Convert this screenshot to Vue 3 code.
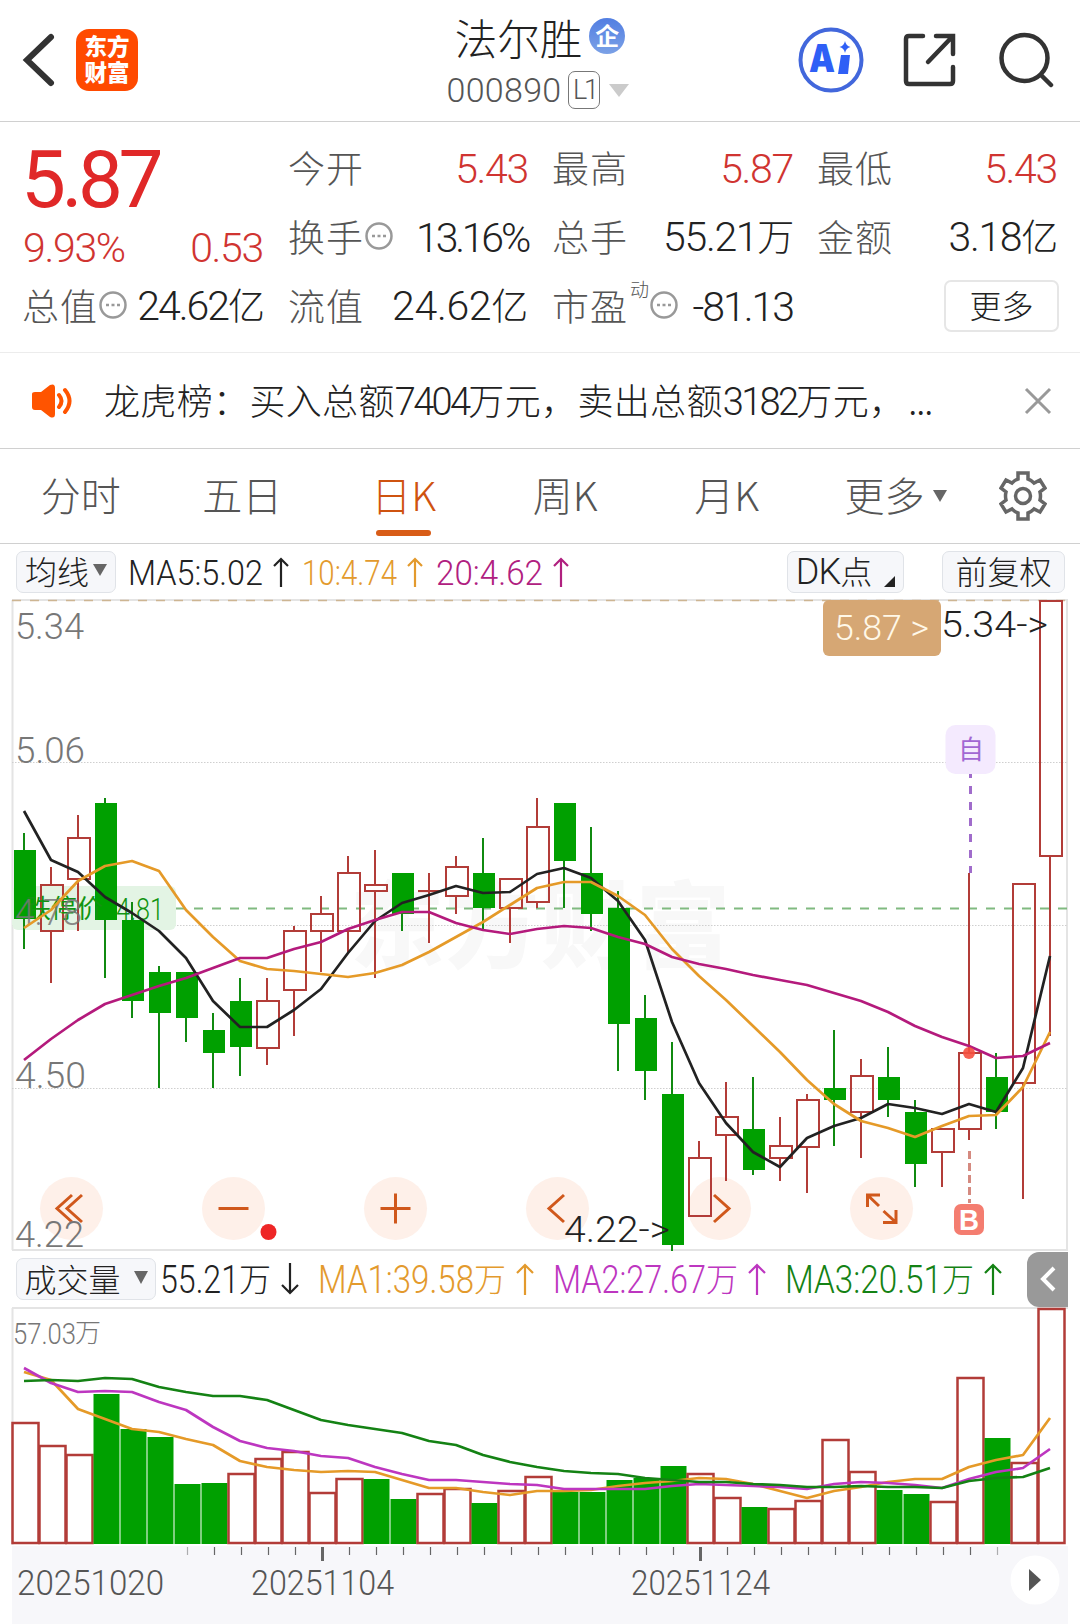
<script setup>
import { ref, computed } from 'vue';

const activeTab = ref(2);
const tabs = ['分时', '五日', '日K', '周K', '月K'];

const news = [
  { text: '龙虎榜：买入总额' },
  { text: '7404', num: true },
  { text: '万元，卖出总额' },
  { text: '3182', num: true },
  { text: '万元，' },
  { text: '...', dots: true },
];

const priceMas = [
  { label: 'MA5:5.02', cls: 'dark', width: 135 },
  { label: '10:4.74', cls: 'amber', width: 95 },
  { label: '20:4.62', cls: 'plum', width: 107 },
];

const volumeMas = [
  { label: '55.21', cls: 'dark', width: 111, down: true },
  { label: 'MA1:39.58', cls: 'amber', width: 188 },
  { label: 'MA2:27.67', cls: 'violet', width: 185 },
  { label: 'MA3:20.51', cls: 'green', width: 189 },
];

const step = 27;
const cx = (i) => 24 + i * step;

// [up, high, body top, body bottom, low]
const candles = [
  [0, 833, 850, 919, 949], [1, 867, 884, 932, 983], [1, 815, 837, 880, 931],
  [0, 798, 803, 920, 978], [0, 902, 920, 1001, 1018], [0, 966, 972, 1013, 1088],
  [0, 972, 972, 1018, 1042], [0, 1013, 1030, 1053, 1088], [0, 978, 1001, 1047, 1076],
  [1, 978, 1000, 1049, 1065], [1, 926, 930, 991, 1036], [1, 896, 913, 932, 972],
  [1, 856, 872, 932, 954], [1, 850, 884, 892, 978], [0, 873, 873, 914, 931],
  [1, 873, 890, 892, 943], [1, 856, 866, 897, 914], [0, 838, 873, 908, 931],
  [1, 878, 878, 909, 943], [1, 798, 826, 903, 908], [0, 803, 803, 861, 908],
  [0, 827, 873, 914, 931], [0, 891, 908, 1024, 1071], [0, 995, 1018, 1071, 1100],
  [0, 1042, 1094, 1245, 1251], [1, 1141, 1157, 1217, 1217], [1, 1082, 1116, 1136, 1181],
  [0, 1077, 1129, 1170, 1175], [1, 1117, 1145, 1159, 1181], [1, 1094, 1099, 1148, 1193],
  [0, 1030, 1088, 1100, 1146], [1, 1059, 1075, 1113, 1158], [0, 1047, 1077, 1100, 1117],
  [0, 1100, 1112, 1164, 1187], [1, 1128, 1128, 1153, 1187], [1, 873, 1052, 1130, 1140],
  [0, 1053, 1077, 1112, 1129], [1, 883, 883, 1084, 1199], [1, 600, 600, 857, 1036],
].map(([up, high, top, bottom, low], i) => ({ up, high, top, bottom, low, x: cx(i) }));

const ma5 = [811, 860, 872, 897, 913, 931, 958, 1001, 1027, 1027, 1010, 989, 953, 921, 903, 895, 886, 893, 892, 874, 868, 878, 901, 940, 1022, 1083, 1123, 1152, 1167, 1138, 1126, 1118, 1104, 1108, 1114, 1104, 1112, 1068, 956];
const ma10 = [928, 910, 881, 866, 861, 871, 910, 937, 961, 969, 971, 974, 977, 973, 965, 952, 937, 922, 905, 888, 882, 882, 896, 915, 949, 976, 1000, 1026, 1052, 1080, 1104, 1121, 1128, 1137, 1126, 1116, 1115, 1087, 1032];
const ma20 = [1060, 1039, 1020, 1004, 995, 986, 978, 968, 958, 958, 949, 942, 929, 920, 912, 912, 923, 930, 934, 929, 926, 928, 937, 944, 957, 964, 969, 975, 980, 985, 993, 1001, 1012, 1026, 1037, 1046, 1058, 1056, 1043];

const volumeTops = [1422, 1445, 1454, 1394, 1429, 1437, 1484, 1483, 1473, 1458, 1451, 1492, 1478, 1479, 1499, 1493, 1488, 1503, 1490, 1476, 1492, 1492, 1480, 1478, 1466, 1473, 1497, 1507, 1508, 1500, 1439, 1471, 1490, 1494, 1501, 1377, 1438, 1462, 1308];
// volume bars are coloured against the previous close, so these days differ from the candle
const volumeFlips = [0, 8, 13, 30];
const vma1 = [1372, 1380, 1409, 1419, 1429, 1432, 1439, 1445, 1461, 1467, 1470, 1472, 1471, 1472, 1480, 1488, 1488, 1492, 1495, 1491, 1491, 1490, 1486, 1483, 1481, 1478, 1479, 1484, 1491, 1498, 1491, 1487, 1482, 1479, 1479, 1467, 1460, 1455, 1418];
const vma2 = [1368, 1383, 1392, 1391, 1392, 1402, 1410, 1427, 1441, 1448, 1451, 1456, 1458, 1467, 1474, 1480, 1480, 1482, 1484, 1485, 1489, 1489, 1489, 1489, 1486, 1484, 1485, 1486, 1487, 1489, 1484, 1482, 1483, 1485, 1488, 1479, 1472, 1468, 1449];
const vma3 = [1381, 1380, 1381, 1378, 1379, 1387, 1392, 1396, 1396, 1400, 1410, 1420, 1425, 1429, 1433, 1441, 1445, 1455, 1462, 1467, 1471, 1473, 1474, 1478, 1480, 1482, 1482, 1484, 1485, 1487, 1487, 1486, 1487, 1487, 1488, 1481, 1478, 1477, 1468];

const line = (values) => values.map((y, i) => `${cx(i)},${y}`).join(' ');
const bars = computed(() => volumeTops.map((top, i) => ({
  top,
  x: 12 + i * step,
  up: volumeFlips.includes(i) ? !candles[i].up : candles[i].up,
})));

const ticks = Array.from({ length: 31 }, (_, k) => ({
  x: 187.5 + k * step,
  major: k === 5 || k === 19,
  faint: k === 0 || k === 30,
}));

const scale = [
  { v: '5.34', x: 15, y: 639, w: 69 },
  { v: '5.06', x: 15, y: 763, w: 70 },
  { v: '4.50', x: 15, y: 1088, w: 71 },
  { v: '4.22', x: 15, y: 1247, w: 69 },
];

const dates = [
  { v: '20251020', x: 17, w: 147 },
  { v: '20251104', x: 251, w: 143 },
  { v: '20251124', x: 631, w: 139 },
];
</script>

<template>
  <div class="page">
    <header class="topbar">
      <div class="side">
        <svg class="back" width="34" height="56" viewBox="0 0 34 56">
          <path d="M29 5 L5 28 L29 51" />
        </svg>
        <div class="logo"><span>东方</span><span>财富</span></div>
      </div>
      <div class="title">
        <div class="name">法尔胜<span class="corp">企</span></div>
        <div class="code num">
          <span class="digits">000890</span><span class="level">L1</span>
          <svg width="20" height="13" viewBox="0 0 20 13"><path d="M0 0 H20 L10 13 Z" fill="#cbcbcb" /></svg>
        </div>
      </div>
      <div class="side actions">
        <svg width="66" height="66" viewBox="0 0 66 66">
          <circle cx="33" cy="33" r="30.5" fill="none" stroke="#4267dc" stroke-width="4" />
          <text class="ai" x="11" y="45" textLength="26" lengthAdjust="spacingAndGlyphs">A</text>
          <path d="M43 28 H52 L50 47 H40 Z" fill="#2f5ff6" />
          <path d="M47 14 Q48 19 52.500 20 Q48 21 47 26 Q46 21 41.500 20 Q46 19 47 14 Z" fill="#2f5ff6" />
        </svg>
        <svg class="stroke" width="54" height="54" viewBox="0 0 54 54">
          <path d="M20 3 H6 Q3 3 3 6 V48 Q3 51 6 51 H47 Q50 51 50 48 V34" />
          <path d="M33 3 H50 V21 M49 4 L25 29" />
        </svg>
        <svg class="stroke" width="56" height="56" viewBox="0 0 56 56">
          <circle cx="26.500" cy="26" r="23" />
          <path d="M43 43 L53 53" />
        </svg>
      </div>
    </header>

    <section class="quote">
      <div class="main">
        <div class="last num">5.87</div>
        <div class="change num"><span>9.93%</span><span>0.53</span></div>
        <div class="cell">
          <span class="label">总值<svg class="info" viewBox="0 0 28 28"><circle cx="14" cy="14" r="12.500" /><path d="M7 14h3M12.500 14h3M18 14h3" /></svg></span>
          <span class="value tight num">24.62<i>亿</i></span>
        </div>
      </div>
      <div class="grid">
        <div class="cell"><span class="label">今开</span><span class="value num red">5.43</span></div>
        <div class="cell"><span class="label">最高</span><span class="value num red">5.87</span></div>
        <div class="cell"><span class="label">最低</span><span class="value num red">5.43</span></div>
        <div class="cell">
          <span class="label">换手<svg class="info" viewBox="0 0 28 28"><circle cx="14" cy="14" r="12.500" /><path d="M7 14h3M12.500 14h3M18 14h3" /></svg></span>
          <span class="value narrow num">13.16%</span>
        </div>
        <div class="cell"><span class="label">总手</span><span class="value num">55.21<i>万</i></span></div>
        <div class="cell"><span class="label">金额</span><span class="value num">3.18<i>亿</i></span></div>
        <div class="cell"><span class="label">流值</span><span class="value wide num">24.62<i>亿</i></span></div>
        <div class="cell">
          <span class="label">市盈<sup>动</sup><svg class="info" viewBox="0 0 28 28"><circle cx="14" cy="14" r="12.500" /><path d="M7 14h3M12.500 14h3M18 14h3" /></svg></span>
          <span class="value tight num">-81.13</span>
        </div>
        <div class="cell end"><button class="more">更多</button></div>
      </div>
    </section>

    <section class="news">
      <svg class="speaker" width="44" height="36" viewBox="0 0 44 36">
        <path d="M2 11 Q2 9 5 9 H11 L20 2 Q25 0 25 5 V31 Q25 36 20 34 L11 27 H5 Q2 27 2 24 Z" fill="#ff5400" />
        <path d="M29 12 Q34 18 29 24 M35 7 Q44 18 35 29" fill="none" stroke="#ff5400" stroke-width="4" stroke-linecap="round" />
      </svg>
      <p><span v-for="(part, i) in news" :key="i" :class="{ num: part.num, ellipsis: part.dots }">{{ part.text }}</span></p>
      <svg class="close" width="28" height="28" viewBox="0 0 28 28"><path d="M2 2 L26 26 M26 2 L2 26" /></svg>
    </section>

    <nav class="tabs">
      <button v-for="(tab, index) in tabs"
              :key="tab"
              class="tab"
              :class="{ active: activeTab === index }"
              @click="activeTab = index">{{ tab }}</button>
      <button class="tab-more">更多<svg width="14" height="12" viewBox="0 0 14 12"><path d="M0 0 H14 L7 12 Z" fill="#666" /></svg></button>
      <svg class="gear" width="48" height="50" viewBox="0 0 48 50">
        <path d="M19 2 H29 V8 Q32 9 35 12 L41 9 L46 17 L41 21 Q42 25 41 29 L46 33 L41 41 L35 38 Q32 41 29 42 V48 H19 V42 Q16 41 13 38 L7 41 L2 33 L7 29 Q6 25 7 21 L2 17 L7 9 L13 12 Q16 9 19 8 Z" />
        <circle cx="24" cy="25" r="7.500" />
      </svg>
    </nav>

    <div class="toolbar">
      <button class="chip avg">均线<svg width="14" height="13" viewBox="0 0 14 13"><path d="M0 0 H14 L7 12 Z" fill="#666" /></svg></button>
      <span v-for="ma in priceMas" :key="ma.label" class="ma" :class="ma.cls">
        <svg :width="ma.width" height="42">
          <text class="num" x="0" y="33.500" font-size="34.500" :textLength="ma.width" lengthAdjust="spacingAndGlyphs">{{ ma.label }}</text>
        </svg>
        <svg class="arrow" width="16" height="30" viewBox="0 0 16 30"><path d="M8 30 V2 M1 9 L8 2 L15 9" /></svg>
      </span>
      <button class="chip dk"><span class="num">DK</span>点<svg width="11" height="11" viewBox="0 0 11 11"><path d="M11 0 V11 H0 Z" fill="#222" /></svg></button>
      <button class="chip adj">前复权</button>
    </div>

    <svg class="chart" width="1080" height="652" viewBox="0 599 1080 652">
      <text class="watermark" x="350" y="961" textLength="380">东方财富</text>
      <path class="frame" d="M12.500 600 V1250 M1067 600 V1250" />
      <path class="frame" d="M12 600 H1068 M12 1250 H1068" />
      <path class="limit-up" d="M12 600.500 H1068" />
      <path class="dots" d="M12 762.500 H1068 M12 925.500 H1068 M12 1088.500 H1068" />
      <rect x="12" y="886" width="164" height="44" rx="6" fill="#e3f4e4" />
      <path class="limit-down" d="M176 908.500 H1068" />

      <g class="controls">
        <circle v-for="n in 6" :key="n" :cx="71.500 + (n - 1) * 162" cy="1208.500" r="31.500" />
        <path d="M72 1195 L57 1208.500 L72 1222 M82 1195 L67 1208.500 L82 1222" />
        <path d="M218.500 1208.500 H248.500" />
        <path d="M380.500 1208.500 H410.500 M395.500 1193.500 V1223.500" />
        <path d="M564 1195 L549 1208.500 L564 1222" />
        <path d="M714 1195 L729 1208.500 L714 1222" />
        <path d="M880 1195 H867.500 V1207 M867.500 1195 L879 1206 M883 1222.500 H896 V1210 M896 1222.500 L883.500 1211" />
      </g>
      <circle cx="268.500" cy="1232" r="8" fill="#ee2626" />

      <text v-for="s in scale"
            :key="s.v"
            class="scale num"
            :x="s.x"
            :y="s.y"
            :textLength="s.w"
            lengthAdjust="spacingAndGlyphs">{{ s.v }}</text>

      <g v-for="c in candles" :key="c.x" :class="c.up ? 'up' : 'down'">
        <path class="wick" :d="`M${c.x} ${c.high} V${c.top} M${c.x} ${c.bottom} V${c.low}`" />
        <rect v-if="c.up" :x="c.x - 10" :y="c.top + 1" width="22" :height="Math.max(c.bottom - c.top - 2, 0.1)" />
        <rect v-else :x="c.x - 10" :y="c.top" width="22" :height="c.bottom - c.top" />
      </g>
      <text class="limit-text" x="25" y="918" textLength="78">跌停价</text>
      <text class="limit-text num" x="116" y="920" font-size="31" textLength="48" lengthAdjust="spacingAndGlyphs">4.81</text>
      <text class="scale num ghost" x="15" y="925" textLength="67" lengthAdjust="spacingAndGlyphs">4.78</text>

      <polyline :points="line(ma5)" stroke="#222" />
      <polyline :points="line(ma10)" stroke="#e59a28" />
      <polyline :points="line(ma20)" stroke="#b41a7c" />

      <circle cx="969" cy="1053" r="6" fill="#f5503f" opacity=".9" />
      <path class="buy-line" d="M969.500 1151 V1203" />
      <rect x="954" y="1204" width="30" height="31" rx="7" fill="#f47d70" />
      <text class="buy" x="959" y="1230" textLength="20" lengthAdjust="spacingAndGlyphs">B</text>

      <path class="self-line" d="M970.500 774 V873" />
      <rect x="945.500" y="725" width="50" height="49" rx="10" fill="#f4eafe" />
      <text class="self" x="958" y="759">自</text>

      <rect x="823" y="600" width="118" height="56" rx="6" fill="#d6a774" />
      <text class="num" x="834" y="640" font-size="35" fill="#fff8e8" textLength="95" lengthAdjust="spacingAndGlyphs">5.87 &gt;</text>
      <text class="num" x="941" y="637" font-size="37" fill="#222" textLength="107" lengthAdjust="spacingAndGlyphs">5.34-&gt;</text>
      <text class="num" x="564" y="1242" font-size="37" fill="#222" textLength="106" lengthAdjust="spacingAndGlyphs">4.22-&gt;</text>
    </svg>

    <div class="volume-bar">
      <button class="chip vol">成交量<svg width="14" height="13" viewBox="0 0 14 13"><path d="M0 0 H14 L7 13 Z" fill="#666" /></svg></button>
      <span v-for="ma in volumeMas" :key="ma.label" class="ma" :class="ma.cls">
        <svg :width="ma.width" height="44">
          <text class="num" x="0" y="36" font-size="38" :textLength="ma.width - 32" lengthAdjust="spacingAndGlyphs">{{ ma.label }}</text>
          <text :x="ma.width - 32" y="34" font-size="32">万</text>
        </svg>
        <svg class="arrow" :class="{ flip: ma.down }" width="18" height="32" viewBox="0 0 18 32"><path d="M9 32 V2 M1 10 L9 2 L17 10" /></svg>
      </span>
      <button class="fold">
        <svg width="16" height="26" viewBox="0 0 16 26"><path d="M14 2 L3 13 L14 24" /></svg>
      </button>
    </div>

    <svg class="volume" width="1080" height="317" viewBox="0 1307 1080 317">
      <path class="frame" d="M12 1308 H1068 M12.500 1308 V1545" />
      <rect x="12" y="1546" width="1056" height="78" fill="#f7f7fa" />
      <text class="num" x="13" y="1344" font-size="30" fill="#777" textLength="63" lengthAdjust="spacingAndGlyphs">57.03</text>
      <text x="75" y="1342" font-size="26" fill="#777">万</text>
      <g v-for="b in bars" :key="b.x" :class="b.up ? 'up' : 'down'">
        <rect v-if="b.up" :x="b.x + .5" :y="b.top + 1" width="26" :height="1543 - b.top - 1" />
        <rect v-else :x="b.x + .5" :y="b.top" width="26" :height="1544 - b.top" />
      </g>
      <polyline :points="line(vma1)" stroke="#e59a28" />
      <polyline :points="line(vma2)" stroke="#bd36c0" />
      <polyline :points="line(vma3)" stroke="#148214" />
      <path v-for="t in ticks"
            :key="t.x"
            class="tick"
            :class="{ major: t.major, faint: t.faint }"
            :d="`M${t.x} 1547 V${t.major ? 1561 : 1555}`" />
      <text v-for="d in dates"
            :key="d.v"
            class="num"
            :x="d.x"
            y="1595"
            font-size="35"
            fill="#555"
            :textLength="d.w"
            lengthAdjust="spacingAndGlyphs">{{ d.v }}</text>
      <circle cx="1035" cy="1580" r="24.500" fill="#fff" />
      <path d="M1029 1569 V1591 L1041 1580 Z" fill="#555" />
    </svg>
  </div>
</template>

<style>
body {
  margin: 0;
  background: #fff;
}
</style>

<style scoped>
.page {
  width: 1080px;
  height: 1624px;
  overflow: hidden;
  display: flex;
  flex-direction: column;
  background: #fff;
  color: #222;
  font-family: "Noto Sans CJK SC", sans-serif;
  font-weight: 300;
}

.num {
  font-family: Roboto, "Noto Sans CJK SC", sans-serif;
  font-weight: 300;
}

button {
  font: inherit;
  color: inherit;
  border: 0;
  padding: 0;
  background: none;
}

svg {
  display: block;
  flex: none;
}

/* header */
.topbar {
  display: flex;
  justify-content: space-between;
  box-sizing: border-box;
  height: 122px;
  padding: 0 26px 0 22px;
  border-bottom: 1px solid #d0d0d0;
}

.side {
  display: flex;
  align-items: center;
  width: 256px;
  height: 120px;
}

.back path {
  fill: none;
  stroke: #333;
  stroke-width: 6;
  stroke-linecap: round;
}

.logo {
  display: flex;
  flex-direction: column;
  justify-content: center;
  align-items: center;
  box-sizing: border-box;
  width: 62px;
  height: 62px;
  margin-left: 20px;
  padding-bottom: 4px;
  border-radius: 13px;
  background: #ff4a00;
  color: #fff;
  font-size: 22.5px;
  font-weight: 900;
  line-height: 26px;
}

.title {
  display: flex;
  flex-direction: column;
  align-items: center;
  padding-top: 11px;
}

.name {
  display: flex;
  align-items: center;
  height: 50px;
  margin-left: 4px;
  font-size: 42.5px;
}

.corp {
  width: 36px;
  height: 36px;
  margin-left: 7px;
  border-radius: 50%;
  background: linear-gradient(#527ee2, #7ba1e6);
  color: #fff;
  font-size: 24px;
  font-weight: 700;
  line-height: 34px;
  text-align: center;
}

.code {
  display: flex;
  align-items: center;
  height: 58px;
  color: #555;
  font-size: 34px;
  letter-spacing: .3px;
}

.level {
  box-sizing: border-box;
  width: 32px;
  height: 38px;
  margin: 0 9px 0 7px;
  border: 1.5px solid #777;
  border-radius: 7px;
  font-size: 27px;
  letter-spacing: -3px;
  line-height: 36px;
  text-align: center;
}

.actions {
  justify-content: space-between;
}

.actions svg:nth-child(2) {
  margin-right: 2px;
}

.ai {
  font-family: Inter, sans-serif;
  font-size: 38px;
  font-weight: 900;
  fill: #2f5ff6;
}

.stroke {
  fill: none;
  stroke: #333;
  stroke-width: 4.5;
  stroke-linecap: round;
}

/* quote */
.quote {
  display: flex;
  gap: 26px;
  box-sizing: border-box;
  height: 231px;
  padding: 12px 22px 0 23px;
  border-bottom: 1px solid #ececec;
}

.main {
  width: 240px;
}

.last {
  height: 88px;
  margin: 2px 0 0 -2px;
  color: #e02828;
  font-size: 80px;
  font-weight: 400;
  letter-spacing: -4.5px;
  line-height: 88px;
}

.change {
  display: flex;
  justify-content: space-between;
  height: 46px;
  margin-top: 1px;
  color: #d03431;
  font-size: 41px;
  letter-spacing: -1.3px;
  line-height: 46px;
}

.grid {
  flex: 1;
  display: grid;
  grid-template-columns: 239px 240px 239px;
  grid-auto-rows: 69px;
  column-gap: 25px;
}

.cell {
  display: flex;
  align-items: center;
  justify-content: space-between;
  height: 69px;
}

.main .cell {
  margin-top: 1px;
}

.end {
  justify-content: flex-end;
}

.label {
  display: flex;
  align-items: center;
  margin: -4px 0 0 -1px;
  color: #555;
  font-size: 37px;
  letter-spacing: 1px;
  line-height: 50px;
}

.label sup {
  align-self: flex-start;
  margin-left: 2px;
  font-size: 19px;
  letter-spacing: 0;
  line-height: 18px;
}

.info {
  width: 28px;
  height: 28px;
  margin: 0 0 0 1px;
  fill: none;
  stroke: #999;
  stroke-width: 2.5;
}

.value {
  font-size: 41px;
  letter-spacing: -1.3px;
  line-height: 50px;
  white-space: nowrap;
}

.value i {
  font-style: normal;
  font-size: 37px;
}

.tight {
  letter-spacing: -2px;
}

.narrow {
  letter-spacing: -3.2px;
}

.wide {
  letter-spacing: -.3px;
}

.red {
  color: #d03431;
}

.more {
  box-sizing: border-box;
  width: 115px;
  height: 52px;
  margin: -2px -2px 0 0;
  padding-bottom: 4px;
  border: 2px solid #e6e6e6;
  border-radius: 7px;
  font-size: 32px;
  line-height: 44px;
}

/* news */
.news {
  display: flex;
  align-items: center;
  box-sizing: border-box;
  height: 96px;
  padding: 0 28px 0 30px;
  border-bottom: 1px solid #d0d0d0;
}

.news p {
  flex: 1;
  margin: -4px 0 0 30px;
  font-size: 36px;
  letter-spacing: .35px;
  white-space: nowrap;
}

.news .num {
  font-size: 38px;
  letter-spacing: -2.7px;
}

.ellipsis {
  margin-left: 3px;
  letter-spacing: -1px;
}

.close path {
  stroke: #999;
  stroke-width: 3;
}

/* tabs */
.tabs {
  display: flex;
  align-items: center;
  box-sizing: border-box;
  height: 95px;
  border-bottom: 1px solid #d0d0d0;
  color: #555;
}

.tab {
  display: flex;
  flex-direction: column;
  align-items: center;
  justify-content: center;
  width: 161.5px;
  height: 98px;
  margin-top: -5px;
  font-size: 40px;
}

.tab.active {
  color: #cf5310;
}

.tab.active::after {
  content: "";
  width: 55px;
  height: 6px;
  margin: 7px 0 -13px;
  border-radius: 3px;
  background: #d85c17;
}

.tab-more {
  display: flex;
  align-items: center;
  gap: 8px;
  margin: -4px 0 0 37px;
  font-size: 40px;
}

.tab-more svg {
  margin-top: 4px;
}

.gear {
  margin-left: 52px;
  fill: none;
  stroke: #666;
  stroke-width: 3.5;
}

/* indicator rows */
.toolbar,
.volume-bar {
  display: flex;
  align-items: center;
  box-sizing: border-box;
  padding-left: 16px;
}

.toolbar {
  height: 55px;
  padding-right: 15px;
}

.volume-bar {
  height: 56px;
  padding-right: 12px;
}

.chip {
  display: flex;
  align-items: center;
  justify-content: center;
  box-sizing: border-box;
  height: 42px;
  padding-bottom: 3px;
  border: 1.5px solid #e0e3e8;
  border-radius: 7px;
  background: #f6f7fa;
  font-size: 32px;
  line-height: 36px;
}

.avg {
  width: 100px;
  gap: 4px;
  margin-right: 12px;
}

.dk {
  width: 117px;
  margin-left: auto;
}

.dk .num {
  margin-top: 3px;
  font-size: 36px;
  letter-spacing: -1px;
}

.dk svg {
  align-self: flex-end;
  margin: 0 0 2px 12px;
}

.adj {
  width: 123px;
  margin-left: 38px;
}

.vol {
  width: 140px;
  gap: 13px;
  margin-right: 4px;
}

.ma {
  display: flex;
  align-items: center;
  fill: currentColor;
}

.ma svg {
  overflow: visible;
}

.toolbar .ma {
  margin-right: 13px;
}

.volume-bar .ma {
  margin-right: 19px;
}

.arrow {
  margin-left: 10px;
  fill: none;
  stroke: currentColor;
  stroke-width: 2.2;
}

.flip {
  transform: rotate(180deg);
}

.dark { color: #222; }
.amber { color: #e39a2d; }
.plum { color: #b0207f; }
.violet { color: #bd36c0; }
.green { color: #148214; }

.fold {
  display: flex;
  align-items: center;
  justify-content: center;
  width: 41px;
  height: 55px;
  margin-left: auto;
  border-radius: 12px 0 0 12px;
  background: #999;
}

.fold path {
  fill: none;
  stroke: #fff;
  stroke-width: 4;
}

/* charts */
.frame {
  fill: none;
  stroke: #e4e4e4;
  stroke-width: 2;
}

.limit-up {
  stroke: #cdb592;
  stroke-width: 1.5;
  stroke-dasharray: 9 9;
}

.limit-down {
  stroke: #80ba80;
  stroke-width: 2;
  stroke-dasharray: 9 9;
}

.dots {
  stroke: #cfcfcf;
  stroke-width: 1;
  stroke-dasharray: 1.5 1.5;
}

.watermark {
  font-size: 94px;
  font-weight: 900;
  fill: #f8f8f8;
}

.controls circle {
  fill: #fef0e9;
}

.controls path {
  fill: none;
  stroke: #d0581c;
  stroke-width: 3;
}

.scale {
  font-size: 37px;
  fill: #777;
}

.ghost {
  opacity: .85;
}

.limit-text {
  fill: #129412;
}

.limit-text:not(.num) {
  font-size: 26px;
  font-weight: 400;
}

.up rect {
  fill: none;
  stroke: #b23c38;
  stroke-width: 2;
}

.volume .up rect {
  stroke-width: 2.5;
}

.up .wick {
  stroke: #b23c38;
  stroke-width: 2;
}

.down rect {
  fill: #00a000;
}

.down .wick {
  stroke: #108a10;
  stroke-width: 2;
}

.volume .down rect {
  stroke: none;
}

polyline {
  fill: none;
  stroke-width: 2.7;
  stroke-linejoin: round;
}

.buy-line {
  stroke: #d58a80;
  stroke-width: 3;
  stroke-dasharray: 8 4;
}

.buy {
  font-family: "Liberation Sans", sans-serif;
  font-size: 30px;
  font-weight: 700;
  fill: #fff;
}

.self-line {
  stroke: #a06ccb;
  stroke-width: 3;
  stroke-dasharray: 8 8;
  stroke-dashoffset: 4;
}

.self {
  font-size: 26px;
  font-weight: 400;
  fill: #a267d3;
}

.tick {
  stroke: #666;
  stroke-width: 1.2;
}

.tick.major {
  stroke-width: 3;
}

.tick.faint {
  opacity: .5;
}
</style>
